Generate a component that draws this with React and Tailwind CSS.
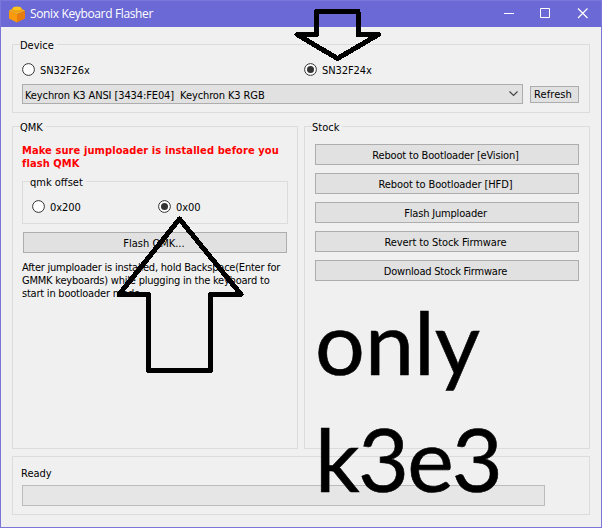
import React from "react";

function Group({ title, className = "", children }) {
  return (
    <fieldset className={`relative min-w-0 border border-[#dcdcdc] ${className}`}>
      {title && (
        <span className="absolute -top-[6px] left-[7px] h-[13px] bg-[#f0f0f0] pr-[3px] leading-[13px] whitespace-nowrap">
          {title}
        </span>
      )}
      {children}
    </fieldset>
  );
}

function Radio({ label, checked, className = "" }) {
  return (
    <label className={`flex h-[13px] items-center gap-[5px] ${className}`}>
      <svg width="13" height="13" viewBox="0 0 13 13" className="shrink-0">
        <circle cx="6.5" cy="6.5" r="5.9" fill="#fff" stroke="#333" strokeWidth="1" />
        {checked && <circle cx="6.5" cy="6.5" r="3.5" fill="#333" />}
      </svg>
      <span className="pt-0.5 tracking-[-0.08px] whitespace-nowrap">{label}</span>
    </label>
  );
}

function Button({ children, className = "" }) {
  return (
    <button
      className={`flex items-center justify-center border border-[#adadad] bg-[#e1e1e1] whitespace-nowrap ${className}`}
    >
      {children}
    </button>
  );
}

function Brick() {
  return (
    <svg width="16" height="17" viewBox="0 0 16 17">
      <path d="M0 4.5 8 8v8.500L0 12.500z" fill="#fb9a0c" />
      <path d="M16 4.500 8 8v8.500l8-4z" fill="#e87c0c" />
      <path d="M0 4.500 8 1l8 3.500L8 8z" fill="#fbb116" />
      <path d="M3.500 2.500v2c1 2 8 2 9 0v-2z" fill="#e99a10" />
      <ellipse cx="8" cy="2.500" rx="4.500" ry="2" fill="#fcc41c" />
    </svg>
  );
}

export default function App() {
  return (
    <div className="relative flex h-[528px] w-[602px] flex-col overflow-hidden border border-[#7b77d9] bg-[#f0f0f0] font-['DejaVu_Sans_Condensed','DejaVu_Sans',sans-serif] text-[11px] leading-[13px] text-black">
      <header className="flex h-[26px] shrink-0 items-center bg-[#6b69d6] pl-2 text-white">
        <Brick />
        <span className="ml-[5px] font-['Open_Sans',sans-serif] text-[12px] leading-[16px] tracking-[-0.36px]">
          Sonix Keyboard Flasher
        </span>
        <svg className="ml-auto" width="97" height="26" viewBox="0 0 97 26" fill="none" stroke="#fff">
          <path d="M0 12.500h10M36.500 7.500h9v9h-9z" />
          <path d="m74 7.500 9.500 9.500m0-9.500L74 17" strokeWidth="1.200" />
        </svg>
      </header>

      <main className="flex flex-col px-[11px] pt-[17px]">
        <Group title="Device" className="h-[69px] w-[578px] px-[9px] pt-[18px]">
          <div className="flex">
            <Radio label="SN32F26x" className="w-[282px]" />
            <Radio label="SN32F24x" checked />
          </div>
          <div className="mt-2 flex items-center gap-[7px]">
            <div className="flex h-5 w-[501px] items-center justify-between border border-[#adadad] bg-[#e1e1e1] pr-1 pl-0.5">
              <span className="pt-0.5 tracking-[-0.11px] whitespace-pre">
                {"Keychron K3 ANSI [3434:FE04]  Keychron K3 RGB"}
              </span>
              <svg width="9" height="6" viewBox="0 0 9 6" fill="none" stroke="#444" strokeWidth="1.200">
                <path d="m.5.5 4 4 4-4" />
              </svg>
            </div>
            <Button className="h-[17px] w-[49px] pr-[3px] tracking-[0.1px]">Refresh</Button>
          </div>
        </Group>

        <div className="mt-[13px] flex gap-[6px]">
          <Group title="QMK" className="h-[323px] w-[286px] px-[9px] pt-[17px]">
            <p className="font-bold tracking-[0.1px] whitespace-nowrap text-[#ff0000]">
              Make sure jumploader is installed before you
              <br />
              flash QMK
            </p>
            <Group title="qmk offset" className="mt-[11px] flex h-[43px] w-[266px] px-[9px] pt-[18px]">
              <Radio label="0x200" className="w-[126px]" />
              <Radio label="0x00" checked />
            </Group>
            <Button className="mt-2 ml-px h-[21px] w-[264px] pt-0.5 pr-0.5">Flash QMK...</Button>
            <p className="mt-2 tracking-[-0.22px] whitespace-nowrap">
              After jumploader is installed, hold Backspace(Enter for
              <br />
              GMMK keyboards) while plugging in the keyboard to
              <br />
              start in bootloader mode.
            </p>
          </Group>
          <Group title="Stock" className="flex h-[323px] w-[286px] flex-col gap-2 px-[10px] pt-[17px]">
            <Button className="h-[21px] w-[264px] pt-0.5 pr-[3px] tracking-[-0.17px]">Reboot to Bootloader [eVision]</Button>
            <Button className="h-[21px] w-[264px] pt-0.5 pr-[3px] tracking-[-0.11px]">Reboot to Bootloader [HFD]</Button>
            <Button className="h-[21px] w-[264px] pt-0.5 pr-[3px] tracking-[-0.18px]">Flash Jumploader</Button>
            <Button className="h-[21px] w-[264px] pt-0.5 pr-[3px] tracking-[-0.1px]">Revert to Stock Firmware</Button>
            <Button className="h-[21px] w-[264px] pt-0.5 pr-[3px] tracking-[-0.2px]">Download Stock Firmware</Button>
          </Group>
        </div>

        <Group className="mt-[7px] h-[59px] w-[578px] px-[9px] pt-[10px]">
          <p className="-ml-px">Ready</p>
          <div className="mt-[5px] h-[21px] w-[523px] border border-[#bcbcbc] bg-[#e6e6e6]" />
        </Group>
      </main>

      {/* Hand annotations over the window */}
      <svg
        className="absolute -top-px -left-px"
        width="602"
        height="528"
        viewBox="0 0 602 528"
        fill="none"
        stroke="#000"
        strokeLinejoin="round"
        shapeRendering="crispEdges"
      >
        <path d="M316.500 11.500h41.500v23h20.500L337.500 58.500 297 34.500h19.500z" strokeWidth="5" />
        <path d="M179.500 219 241 294.500h-30.500v76h-62v-76H119z" strokeWidth="5" />
      </svg>
      <div className="absolute top-[282px] left-[314px] font-['Lato',sans-serif] text-[88px] leading-[117px] whitespace-nowrap [-webkit-text-stroke:0.6px_#000]">
        <p className="tracking-[0px]">only</p>
        <p className="tracking-[-1.8px]">k3e3</p>
      </div>
    </div>
  );
}
